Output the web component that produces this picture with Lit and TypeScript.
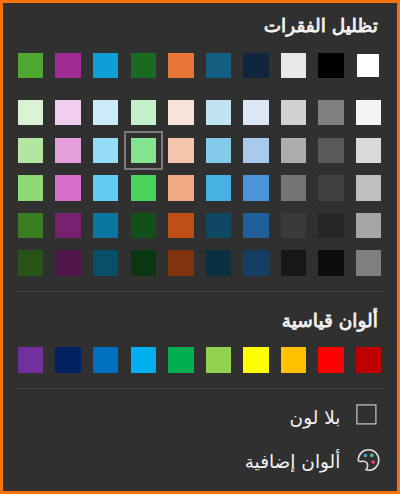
import { LitElement, html, css } from "lit";
import { customElement, property } from "lit/decorators.js";
import { classMap } from "lit/directives/class-map.js";
import { styleMap } from "lit/directives/style-map.js";

const THEME = [
  ["#ffffff", "#000000", "#e8e8e8", "#10263f", "#156082", "#e97536", "#196b24", "#0f9ed5", "#a02b93", "#4ea72e"],
];

const SHADES = [
  ["#f4f4f4", "#7f7f7f", "#d1d1d1", "#dde6f4", "#c1e4f4", "#f7e2d8", "#c2f0c9", "#caebf7", "#f1ceed", "#dbf1d3"],
  ["#d9d9d9", "#595959", "#adadad", "#a7c9ec", "#83caeb", "#f4c5ac", "#83e38e", "#94dcf8", "#e49edb", "#b4e5a2"],
  ["#bfbfbf", "#404040", "#757575", "#4c94d8", "#46b1e1", "#f1aa84", "#47d459", "#61cbf4", "#d86ecc", "#8ed973"],
  ["#a6a6a6", "#262626", "#3a3a3a", "#215f9a", "#104861", "#bf4e14", "#12501b", "#0b76a0", "#782170", "#3b7d23"],
  ["#7f7f7f", "#0d0d0d", "#171717", "#153e64", "#0b3041", "#7f340f", "#0b3612", "#074f69", "#50164a", "#285318"],
];

const STANDARD = [
  ["#c00000", "#ff0000", "#ffc000", "#ffff00", "#92d050", "#00b050", "#00b0f0", "#0070c0", "#002060", "#7030a0"],
];

@customElement("swatch-grid")
export class SwatchGrid extends LitElement {
  @property({ attribute: false }) rows: string[][] = [];
  @property() selected = "";

  static styles = css`
    :host { display: block; }
    .grid {
      display: grid;
      grid-template-columns: repeat(10, 25.4px);
      grid-auto-rows: 25.4px;
      gap: 12.2px;
    }
    .swatch { display: block; }
    .white { margin: 1px 2px 1.4px 1px; }
    .selected { outline: 2px solid #7d7a7d; outline-offset: 5px; }
  `;

  render() {
    return html`<div class="grid">
      ${this.rows.flat().map(
        (c) => html`<span
          class=${classMap({ swatch: true, white: c === "#ffffff", selected: c === this.selected })}
          style=${styleMap({ backgroundColor: c })}
        ></span>`
      )}
    </div>`;
  }
}

@customElement("app-root")
export class AppRoot extends LitElement {
  static styles = css`
    :host { display: block; }
    .panel {
      box-sizing: border-box;
      width: 400px;
      height: 494px;
      border: 3px solid #f9720a;
      background: #303030;
      color: #f2f2f2;
      padding: 6px 15.6px 0 14.6px;
      font-family: "DejaVu Sans", "Noto Sans", sans-serif;
      overflow: hidden;
    }
    .title {
      margin: 0 3.600px 0 0;
      height: 32px;
      line-height: 34px;
      font-size: 18.5px;
      font-weight: 400;
      -webkit-text-stroke: 0.8px currentColor;
      white-space: nowrap;
    }
    .theme { margin-top: 12px; }
    .shades { margin-top: 21.6px; }
    .line { height: 1px; background: #454545; margin: 0 -3px 0 -1px; }
    .first { margin-top: 15.2px; }
    .standard-title { margin-top: 12px; }
    .standard { margin-top: 11.6px; }
    .second { margin-top: 15.6px; }
    .item {
      display: flex;
      align-items: center;
      height: 44px;
      gap: 16px;
      font-size: 18.5px;
      white-space: nowrap;
    }
    .items { padding: 5px 1px 0 0; }
    .label { margin-top: 2px; }
    .icon { display: block; width: 24px; height: 24px; flex: none; }
  `;

  render() {
    return html`<main class="panel" dir="rtl" lang="ar">
      <h2 class="title">تظليل الفقرات</h2>
      <swatch-grid class="theme" .rows=${THEME}></swatch-grid>
      <swatch-grid class="shades" .rows=${SHADES} selected="#83e38e"></swatch-grid>
      <div class="line first"></div>
      <h2 class="title standard-title">ألوان قياسية</h2>
      <swatch-grid class="standard" .rows=${STANDARD}></swatch-grid>
      <div class="line second"></div>
      <div class="items">
        <div class="item">
          <svg class="icon" viewBox="0 0 24 24">
            <rect x="0.9" y="0.9" width="19" height="19" fill="none" stroke="#bdbdbd" stroke-width="1.3" />
          </svg>
          <span class="label">بلا لون</span>
        </div>
        <div class="item">
          <svg class="icon" viewBox="0 0 24 24">
            <path
              d="M2.300 12.600C2.100 6.400 6.700 1.800 12.600 1.800c5.700 0 10.200 4.500 10.200 10.200 0 5.800-4.500 10.300-10.200 10.300-1 0-2.100-.2-2.700-.6 1.200-1.100 1.800-2.500 1.700-4.100-.1-2.400-1.700-4.300-3.900-4.400-1.800-.1-4.200 1.300-5.400-.6Z"
              fill="none" stroke="#dedede" stroke-width="1.600" stroke-linejoin="round"
            />
            <circle cx="9.400" cy="7.600" r="1.800" fill="#4a9cd0" />
            <circle cx="15.800" cy="7.400" r="1.800" fill="#4cc4a0" />
            <circle cx="17.300" cy="14" r="1.800" fill="#e8507c" />
          </svg>
          <span class="label">ألوان إضافية</span>
        </div>
      </div>
    </main>`;
  }
}
